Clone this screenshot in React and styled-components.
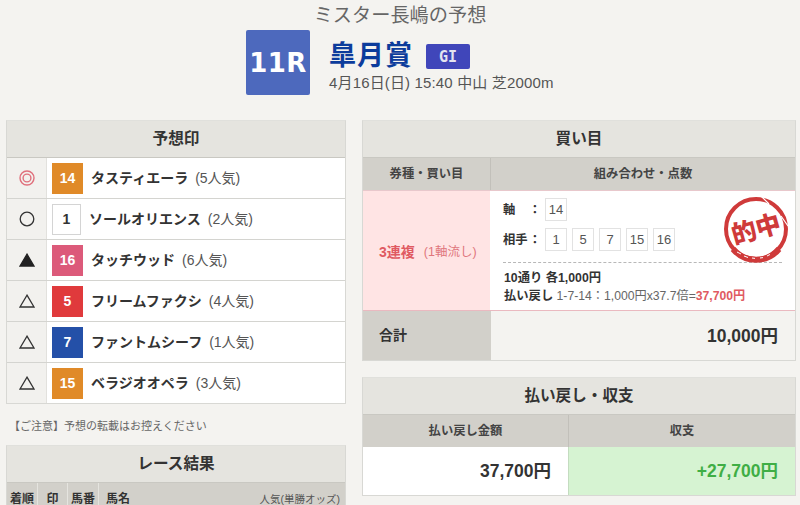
import React from 'react';
import styled, { createGlobalStyle } from 'styled-components';

const FONT = '"Liberation Sans", "Noto Sans CJK JP", sans-serif';

const GlobalStyle = createGlobalStyle`
  html, body {
    margin: 0;
    padding: 0;
    height: 505px;
    overflow: hidden;
    background: #f4f3f0;
    font-family: ${FONT};
    color: #333;
  }
  * { box-sizing: border-box; }
`;

const picks = [
  { mark: 'double', num: 14, color: '#e08a28', name: 'タスティエーラ', pop: '(5人気)' },
  { mark: 'circle', num: 1, color: '#fff', name: 'ソールオリエンス', pop: '(2人気)' },
  { mark: 'filled', num: 16, color: '#dc5a7a', name: 'タッチウッド', pop: '(6人気)' },
  { mark: 'tri', num: 5, color: '#e03a3c', name: 'フリームファクシ', pop: '(4人気)' },
  { mark: 'tri', num: 7, color: '#2450a8', name: 'ファントムシーフ', pop: '(1人気)' },
  { mark: 'tri', num: 15, color: '#e08a28', name: 'ベラジオオペラ', pop: '(3人気)' },
];

const Mark = ({ type }) => {
  if (type === 'double') {
    return (
      <svg width="16" height="16" viewBox="0 0 16 16">
        <circle cx="8" cy="8" r="7" fill="none" stroke="#e0707c" strokeWidth="1.4" />
        <circle cx="8" cy="8" r="3.9" fill="none" stroke="#e0707c" strokeWidth="1.4" />
      </svg>
    );
  }
  if (type === 'circle') {
    return (
      <svg width="16" height="16" viewBox="0 0 16 16">
        <circle cx="8" cy="8" r="6.8" fill="none" stroke="#333" strokeWidth="1.3" />
      </svg>
    );
  }
  const filled = type === 'filled';
  return (
    <svg width="16" height="14" viewBox="0 0 16 14">
      <path
        d="M8 1.2 L15 13 L1 13 Z"
        fill={filled ? '#222' : 'none'}
        stroke={filled ? '#222' : '#333'}
        strokeWidth="1.3"
      />
    </svg>
  );
};

// hand-stamped ring, thicker along the bottom where the tiny lettering sits
const Stamp = () => (
  <StampWrap>
    <svg width="68" height="70" viewBox="0 0 68 70">
      <circle cx="34" cy="34" r="30" fill="none" stroke="#cf3a3a" strokeWidth="4" />
      <path d="M11 54 A30 30 0 0 0 57 54" fill="none" stroke="#cf3a3a" strokeWidth="6" />
      <path
        d="M15 57 l4 2 M22 61 l4 1.5 M30 63 l3 .4 M38 63 l3 -.4 M45 61 l3 -1.5"
        stroke="#fff"
        strokeWidth="1"
      />
      <path d="M39 1 L47 9 M59 21 L66 31" stroke="#fff" strokeWidth="1.2" />
      <text
        x="34"
        y="43"
        textAnchor="middle"
        fontSize="25"
        fontWeight="900"
        fill="#cf3a3a"
        transform="rotate(-16 34 34)"
        fontFamily='"Noto Sans CJK JP", sans-serif'
      >
        的中
      </text>
    </svg>
  </StampWrap>
);

export default function App() {
  return (
    <Page>
      <GlobalStyle />
      <Header>
        <Author>ミスター長嶋の予想</Author>
        <RaceLine>
          <RaceNo>11R</RaceNo>
          <RaceInfo>
            <RaceTitle>
              <RaceName>皐月賞</RaceName>
              <Grade>GI</Grade>
            </RaceTitle>
            <RaceMeta>4月16日(日) 15:40 中山 芝2000m</RaceMeta>
          </RaceInfo>
        </RaceLine>
      </Header>

      <Columns>
        <LeftColumn>
          <Panel>
            <PanelHead>予想印</PanelHead>
            {picks.map(p => (
              <PickRow key={p.num}>
                <MarkCell>
                  <Mark type={p.mark} />
                </MarkCell>
                <PickCell>
                  <Waku $color={p.color}>{p.num}</Waku>
                  <HorseName>{p.name}</HorseName>
                  <Popularity>{p.pop}</Popularity>
                </PickCell>
              </PickRow>
            ))}
          </Panel>
          <Notice>【ご注意】予想の転載はお控えください</Notice>
          <Panel>
            <PanelHead>レース結果</PanelHead>
            <ResultHead>
              <ResultCol $w={31}>着順</ResultCol>
              <ResultCol $w={30}>印</ResultCol>
              <ResultCol $w={31}>馬番</ResultCol>
              <ResultName>馬名</ResultName>
              <ResultOdds>人気(単勝オッズ)</ResultOdds>
            </ResultHead>
          </Panel>
        </LeftColumn>

        <RightColumn>
          <Panel>
            <PanelHead>買い目</PanelHead>
            <TwoCols $left={127}>
              <SubHead>券種・買い目</SubHead>
              <SubHead $divider>組み合わせ・点数</SubHead>
            </TwoCols>
            <TwoCols $left={127} $hit>
              <BetType>
                <b>3連複</b>
                <small>(1軸流し)</small>
              </BetType>
              <BetBody>
                <Stamp />
                <NumLine>
                  <NumLabel>
                    <span>軸</span>
                    <span>：</span>
                  </NumLabel>
                  <NumBox>14</NumBox>
                </NumLine>
                <NumLine>
                  <NumLabel>
                    <span>相手</span>
                    <span>：</span>
                  </NumLabel>
                  {[1, 5, 7, 15, 16].map(n => (
                    <NumBox key={n}>{n}</NumBox>
                  ))}
                </NumLine>
                <BetSummary>
                  <strong>10通り 各1,000円</strong>
                  <PayLine>
                    <strong>払い戻し</strong> 1-7-14：1,000円x37.7倍=<em>37,700円</em>
                  </PayLine>
                </BetSummary>
              </BetBody>
            </TwoCols>
            <TwoCols $left={127}>
              <TotalLabel>合計</TotalLabel>
              <TotalValue>10,000円</TotalValue>
            </TwoCols>
          </Panel>

          <Panel>
            <PanelHead>払い戻し・収支</PanelHead>
            <TwoCols $left={205}>
              <SubHead>払い戻し金額</SubHead>
              <SubHead $divider>収支</SubHead>
            </TwoCols>
            <TwoCols $left={205}>
              <Amount>37,700円</Amount>
              <Amount $profit>+27,700円</Amount>
            </TwoCols>
          </Panel>
        </RightColumn>
      </Columns>
    </Page>
  );
}

const Page = styled.div`
  width: 800px;
  height: 505px;
  overflow: hidden;
  padding: 6px 4px 0 6px;
`;

const Header = styled.header`
  display: flex;
  flex-direction: column;
  align-items: center;
  height: 114px;
  padding-right: 2px;
`;

const Author = styled.h2`
  margin: 0;
  font-size: 19.2px;
  line-height: 20px;
  font-weight: 400;
  color: #666;
`;

const RaceLine = styled.div`
  display: flex;
  align-self: flex-start;
  margin: 4px 0 0 240px;
  gap: 19px;
`;

const RaceNo = styled.div`
  width: 64px;
  height: 65px;
  display: flex;
  align-items: center;
  justify-content: center;
  background: #4d69bd;
  border-radius: 2px;
  color: #fff;
  font-family: "DejaVu Sans", sans-serif;
  font-size: 26px;
  font-weight: 700;
  letter-spacing: 0.5px;
`;

const RaceInfo = styled.div`
  display: flex;
  flex-direction: column;
  padding-top: 10px;
`;

const RaceTitle = styled.div`
  display: flex;
  align-items: center;
  gap: 13px;
  height: 33px;
`;

const RaceName = styled.span`
  font-size: 27px;
  line-height: 33px;
  font-weight: 700;
  color: #0c3c9c;
  letter-spacing: 1px;
`;

const Grade = styled.span`
  width: 44px;
  height: 25px;
  display: flex;
  align-items: center;
  justify-content: center;
  background: #4046ba;
  border-radius: 2px;
  color: #e4e4f0;
  font-family: "DejaVu Sans Mono", monospace;
  font-size: 15px;
  font-weight: 700;
`;

const RaceMeta = styled.div`
  margin-top: 1px;
  font-size: 15px;
  line-height: 18px;
  letter-spacing: 0.15px;
  color: #555;
`;

const Columns = styled.div`
  display: flex;
  gap: 16px;
  align-items: flex-start;
`;

const LeftColumn = styled.div`
  width: 340px;
  flex: none;
`;

const RightColumn = styled.div`
  width: 434px;
  flex: none;
  display: flex;
  flex-direction: column;
  gap: 16px;
`;

const Panel = styled.section`
  border: 1px solid #d8d8d4;
  border-top-color: #e0e0dc;
  background: #fff;
`;

const PanelHead = styled.h3`
  margin: 0;
  height: 37px;
  padding-bottom: 4px;
  display: flex;
  align-items: center;
  justify-content: center;
  background: #e5e4df;
  border-bottom: 1px solid #c9c8c2;
  font-size: 15.6px;
  font-weight: 700;
  color: #333;
`;

const PickRow = styled.div`
  display: flex;
  height: 41px;
  border-bottom: 1px solid #d4d4d0;

  &:last-child {
    border-bottom: 0;
    height: 40px;
  }
`;

const MarkCell = styled.div`
  width: 40px;
  flex: none;
  display: flex;
  align-items: center;
  justify-content: center;
  background: #f2f1ee;
  border-right: 1px solid #e2e1dd;
`;

const PickCell = styled.div`
  flex: 1;
  display: flex;
  align-items: center;
  padding-left: 5px;
`;

const Waku = styled.span`
  width: ${({ $color }) => ($color === '#fff' ? '29px' : '31px')};
  height: 31px;
  flex: none;
  display: flex;
  align-items: center;
  justify-content: center;
  background: ${({ $color }) => $color};
  border: ${({ $color }) => ($color === '#fff' ? '1px solid #d4d4d4' : '0')};
  color: ${({ $color }) => ($color === '#fff' ? '#333' : '#fff')};
  font-size: 14px;
  font-weight: 700;
`;

const HorseName = styled.span`
  margin: 0 0 3px 8px;
  font-size: 14px;
  font-weight: 700;
  color: #333;
`;

const Popularity = styled.span`
  margin: 0 0 3px 7px;
  font-size: 14px;
  color: #555;
`;

const Notice = styled.p`
  margin: 0;
  height: 41px;
  padding-left: 3px;
  display: flex;
  align-items: center;
  font-size: 11px;
  color: #666;
`;

const ResultHead = styled.div`
  display: flex;
  height: 22px;
  background: #d2d0ca;
  font-size: 12px;
  font-weight: 700;
  color: #333;
`;

const ResultCol = styled.span`
  width: ${({ $w }) => $w}px;
  flex: none;
  text-align: center;
  line-height: 32px;
  border-right: 1px solid #e5e4df;
`;

const ResultName = styled.span`
  padding-left: 7px;
  line-height: 32px;
`;

const ResultOdds = styled.span`
  margin-left: auto;
  padding-right: 5px;
  line-height: 32px;
  font-size: 10.5px;
  font-weight: 400;
  color: #555;
`;

const TwoCols = styled.div`
  display: grid;
  grid-template-columns: ${({ $left }) => $left}px 1fr;
  ${({ $hit }) => $hit && 'border-top: 1px solid #e8c8cc; border-bottom: 1px solid #eab9c0;'}
`;

const SubHead = styled.div`
  height: 32px;
  padding-bottom: 2px;
  display: flex;
  align-items: center;
  justify-content: center;
  background: #d2d0ca;
  border-left: ${({ $divider }) => ($divider ? '1px solid #c2c0ba' : '0')};
  font-size: 12.3px;
  font-weight: 700;
  color: #444;
`;

const BetType = styled.div`
  display: flex;
  align-items: center;
  padding-left: 16px;
  gap: 9px;
  background: #ffe4e4;
  color: #e05a62;

  b {
    font-size: 14px;
    font-weight: 700;
  }

  small {
    font-size: 12.5px;
    color: #e0767c;
  }
`;

const BetBody = styled.div`
  position: relative;
  height: 119px;
  padding: 7px 13px 0 13px;
  background: #fff;
`;

const StampWrap = styled.div`
  position: absolute;
  right: 5px;
  top: 4px;
`;

const NumLine = styled.div`
  display: flex;
  align-items: center;
  gap: 5px;
  height: 23px;
  margin-bottom: 7px;
`;

const NumLabel = styled.div`
  width: 38px;
  margin: 0 -1px 1px 0;
  display: flex;
  justify-content: space-between;
  font-size: 12.3px;
  font-weight: 700;
  color: #333;
`;

const NumBox = styled.span`
  width: 22px;
  height: 23px;
  display: flex;
  align-items: center;
  justify-content: center;
  border: 1px solid #e2e2e2;
  font-size: 13px;
  color: #555;
`;

const BetSummary = styled.div`
  margin-top: 11px;
  padding: 6px 0 0 1px;
  border-top: 1px dashed #b8b8b8;
  font-size: 12.3px;
  line-height: 18px;
  color: #333;
`;

const PayLine = styled.div`
  font-size: 12.2px;
  color: #666;

  strong {
    font-size: 12.3px;
    color: #333;
  }

  em {
    font-style: normal;
    font-weight: 700;
    color: #e05a62;
  }
`;

const TotalLabel = styled.div`
  height: 49px;
  display: flex;
  align-items: center;
  padding: 0 0 3px 16px;
  background: #d2d0ca;
  font-size: 14px;
  font-weight: 700;
`;

const TotalValue = styled.div`
  display: flex;
  align-items: center;
  justify-content: flex-end;
  padding: 0 17px 3px 0;
  background: #f4f3f0;
  border-left: 1px solid #d2d0ca;
  font-size: 17.5px;
  font-weight: 700;
  color: #333;
`;

const Amount = styled.div`
  height: 48px;
  display: flex;
  align-items: center;
  justify-content: flex-end;
  padding: 0 17px 3px 0;
  background: ${({ $profit }) => ($profit ? '#d6f3d2' : '#fff')};
  border-left: ${({ $profit }) => ($profit ? '1px solid #c4dcc0' : '0')};
  font-size: 17.5px;
  font-weight: 700;
  color: ${({ $profit }) => ($profit ? '#3fae45' : '#333')};
`;
